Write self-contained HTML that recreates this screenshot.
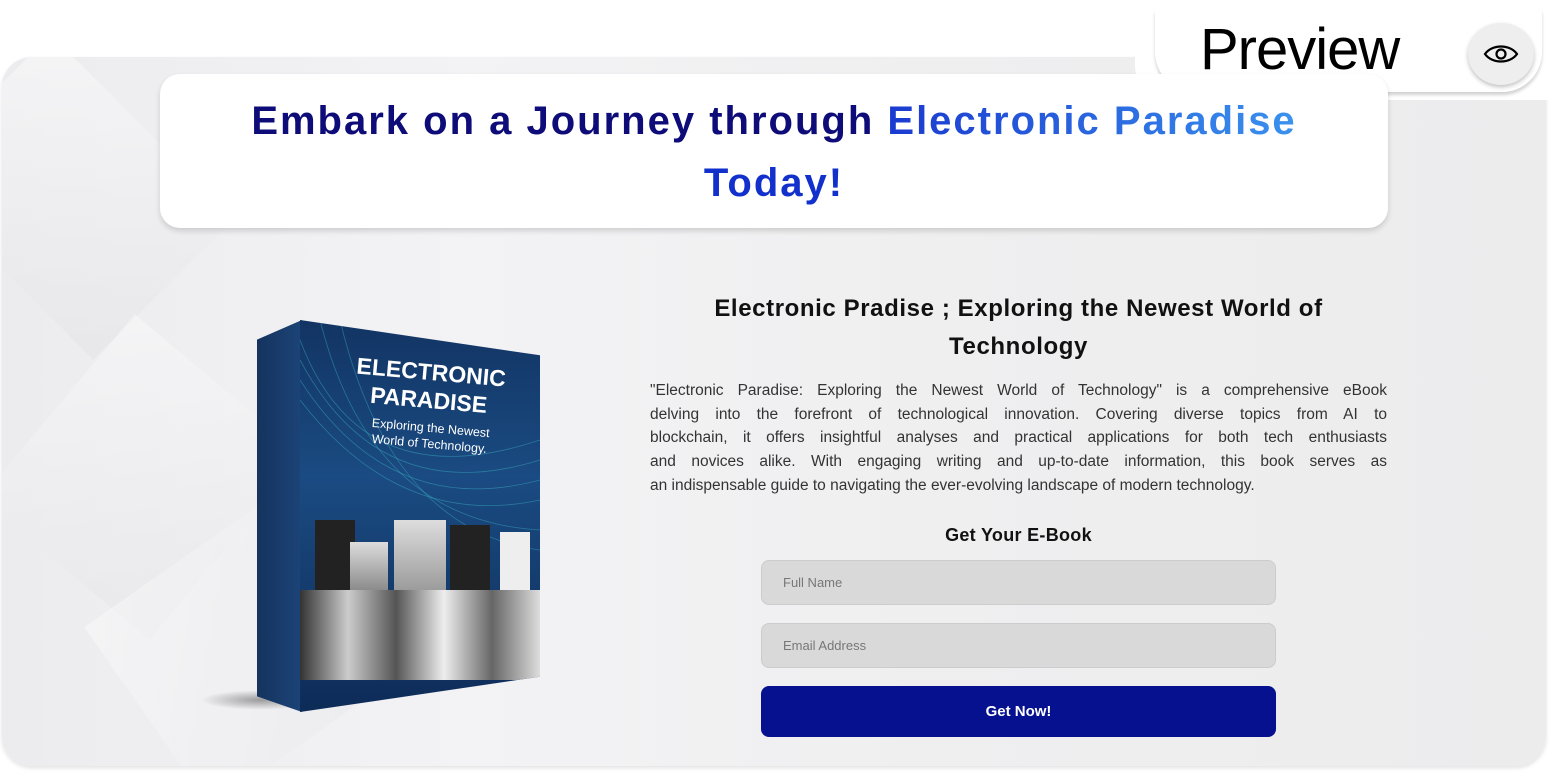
<!DOCTYPE html>
<html><head><style>
*{margin:0;padding:0;box-sizing:border-box}
body{width:1558px;height:779px;background:#fff;position:relative;overflow:hidden;font-family:"Liberation Sans",sans-serif}
.card{position:absolute;left:2px;top:57px;width:1544px;height:709px;border-radius:30px;overflow:hidden;
background:linear-gradient(90deg,#ececee 0%,#f3f3f5 30%,#efeff0 60%,#ececed 100%);box-shadow:0 2px 4px rgba(0,0,0,.12)}
.sh{position:absolute;background:linear-gradient(135deg,#fafafb,#e4e4e7)}
.tabbg{position:absolute;left:1135px;top:0;width:423px;height:100px;background:#fff;border-radius:0 0 0 34px}
.tab{position:absolute;left:1155px;top:10px;width:387px;height:82px;background:#fff;border-radius:0 0 40px 40px;box-shadow:0 3px 3px rgba(0,0,0,.18)}
.prev{position:absolute;left:1200px;top:16px;font-size:58px;color:#000;letter-spacing:-1px}
.eye{position:absolute;left:1468px;top:23px;width:66px;height:62px;border-radius:50%;background:#eee;box-shadow:0 2px 4px rgba(0,0,0,.25);display:flex;align-items:center;justify-content:center}
.head{position:absolute;left:160px;top:74px;width:1228px;height:154px;background:#fff;border-radius:20px;box-shadow:0 3px 6px rgba(0,0,0,.15);text-align:center;font-weight:bold;font-size:40px;letter-spacing:2px;line-height:62px;padding-top:16px}
.h2{position:absolute;left:640px;top:290px;width:757px;text-align:center;font-weight:bold;font-size:24px;letter-spacing:.6px;line-height:38px;color:#111}
.p{position:absolute;left:650px;top:379px;width:737px;font-size:15.5px;line-height:23.7px;color:#333}
.p div{text-align:justify;text-align-last:justify;white-space:nowrap}
.p div:last-child{text-align-last:left}
.gy{position:absolute;left:761px;top:525px;width:515px;text-align:center;font-weight:bold;font-size:18px;letter-spacing:.3px;color:#111}
.in{position:absolute;left:761px;width:515px;height:45px;background:#d9d9d9;border-radius:8px;border:1px solid #ccc;font-size:13px;color:#777;padding:14px 0 0 21px}
.btn{position:absolute;left:761px;top:686px;width:515px;height:51px;background:#06118f;border-radius:8px;color:#fff;font-weight:bold;font-size:15px;text-align:center;line-height:51px}
.side{position:absolute;left:257px;top:320px;width:45px;height:392px;background:linear-gradient(90deg,#15335e,#1c4478);clip-path:polygon(0 5%,100% 0,100% 100%,0 96%)}
.front{position:absolute;left:300px;top:320px;width:240px;height:392px;background:linear-gradient(180deg,#123463,#1a4b82 40%,#0e2b57);clip-path:polygon(0 0,100% 9%,100% 91%,0 100%)}
.ft{position:absolute;color:#fff;font-weight:bold;text-align:center;transform:rotate(5deg)}
.ap{position:absolute;background:linear-gradient(180deg,#ddd,#777)}
</style></head><body>
<div class="card">
 <div class="sh" style="left:-60px;top:40px;width:260px;height:200px;transform:rotate(45deg);opacity:.6"></div>
 <div class="sh" style="left:30px;top:300px;width:220px;height:240px;transform:rotate(40deg);opacity:.5"></div>
 <div class="sh" style="left:120px;top:470px;width:280px;height:220px;transform:rotate(-35deg);opacity:.5"></div>
</div>
<div class="tabbg"></div>
<div class="tab"></div>
<div class="prev">Preview</div>
<div class="eye"><svg width="36" height="24" viewBox="0 0 36 24"><path d="M2 12 C9 2,27 2,34 12 C27 22,9 22,2 12Z" fill="none" stroke="#000" stroke-width="2.2"/><circle cx="18" cy="12" r="4.5" fill="none" stroke="#000" stroke-width="2.2"/></svg></div>
<div class="head"><span style="color:#0d0c78">Embark on a Journey through </span><span style="background:linear-gradient(90deg,#1a3ad0,#3a92ee);-webkit-background-clip:text;color:transparent">Electronic Paradise</span><br><span style="color:#1130cc">Today!</span></div>

<div style="position:absolute;left:200px;top:690px;width:120px;height:20px;background:radial-gradient(ellipse,rgba(0,0,0,.35),transparent 70%)"></div>
<div class="side"></div>
<div class="front">
 <svg style="position:absolute;left:0;top:0" width="240" height="392"><g fill="none" stroke="#3fb8c8" stroke-opacity=".45" stroke-width=".8">
 <path d="M0 20 Q60 180 240 120"/><path d="M0 40 Q80 190 240 140"/><path d="M0 60 Q90 200 240 160"/><path d="M0 80 Q100 210 240 180"/><path d="M20 0 Q70 200 240 210"/><path d="M40 0 Q90 210 240 230"/></g></svg>
 <div class="ft" style="left:45px;top:38px;width:170px;font-size:23px;line-height:28px">ELECTRONIC<br>PARADISE</div>
 <div class="ft" style="left:45px;top:100px;width:170px;font-size:12.5px;font-weight:normal;line-height:16px">Exploring the Newest<br>World of Technology.</div>
 <div class="ap" style="left:15px;top:200px;width:40px;height:80px;background:#222"></div>
 <div class="ap" style="left:50px;top:222px;width:38px;height:60px"></div>
 <div class="ap" style="left:94px;top:200px;width:52px;height:73px;background:linear-gradient(#ddd,#999)"></div>
 <div class="ap" style="left:150px;top:205px;width:40px;height:80px;background:#222"></div>
 <div class="ap" style="left:200px;top:212px;width:30px;height:80px;background:#eee"></div>
 <div class="ap" style="left:0;top:270px;width:240px;height:90px;background:linear-gradient(90deg,#333,#ccc,#555,#eee,#666,#ddd)"></div>
</div>

<div class="h2">Electronic Pradise ; Exploring the Newest World of<br>Technology</div>
<div class="p">
<div>"Electronic Paradise: Exploring the Newest World of Technology" is a comprehensive eBook</div>
<div>delving into the forefront of technological innovation. Covering diverse topics from AI to</div>
<div>blockchain, it offers insightful analyses and practical applications for both tech enthusiasts</div>
<div>and novices alike. With engaging writing and up-to-date information, this book serves as</div>
<div>an indispensable guide to navigating the ever-evolving landscape of modern technology.</div>
</div>
<div class="gy">Get Your E-Book</div>
<div class="in" style="top:560px">Full Name</div>
<div class="in" style="top:623px">Email Address</div>
<div class="btn">Get Now!</div>
</body></html>
